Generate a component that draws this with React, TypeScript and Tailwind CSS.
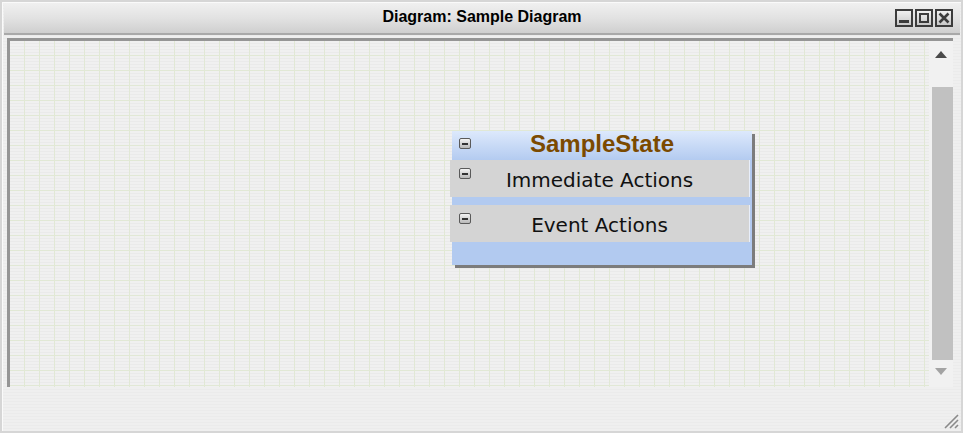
import React from "react";

function Collapse({ className = "" }: { className?: string }) {
  return (
    <div
      className={
        "w-[12px] h-[11px] rounded-[2px] border border-[#5a5a5a] bg-[linear-gradient(to_bottom,#f4f4f4,#b8b8b8)] flex items-center justify-center " +
        className
      }
    >
      <div className="w-[6px] h-[2px] bg-[#333]" />
    </div>
  );
}

function WinBtn({ kind }: { kind: "min" | "max" | "close" }) {
  return (
    <div className="w-[18px] h-[18px] border-2 border-[#3c3c3c] bg-[linear-gradient(to_bottom,#f0f0f0,#c8c8c8)] relative flex items-center justify-center">
      {kind === "min" && <div className="absolute left-[2px] right-[2px] bottom-[2px] h-[3px] bg-[#3c3c3c]" />}
      {kind === "max" && <div className="w-[10px] h-[10px] border-2 border-[#3c3c3c]" />}
      {kind === "close" && (
        <svg width="12" height="12" viewBox="0 0 12 12">
          <path d="M1.5 1.5 L10.5 10.5 M10.5 1.5 L1.5 10.5" stroke="#3c3c3c" strokeWidth="2.6" />
        </svg>
      )}
    </div>
  );
}

export default function App() {
  return (
    <div className="w-[963px] h-[433px] bg-[#d6d6d6] p-[2px] font-['Liberation_Sans',Arial,sans-serif] overflow-hidden">
      <div className="w-full h-full border-t border-l border-[#fafafa] bg-[repeating-linear-gradient(to_bottom,#efefef_0px,#efefef_2px,#ebebeb_2px,#ebebeb_3px)] flex flex-col">
        {/* Title bar */}
        <div className="h-[32px] mx-[1px] bg-[linear-gradient(to_bottom,#f0f0f0,#e2e2e2_50%,#cfcfcf)] border-b-2 border-[#a9a9a9] relative flex items-center justify-center">
          <span className="text-[16px] font-bold text-black leading-none mt-[-2px]">Diagram: Sample Diagram</span>
          <div className="absolute right-[7px] top-[6px] flex gap-[2px]">
            <WinBtn kind="min" />
            <WinBtn kind="max" />
            <WinBtn kind="close" />
          </div>
        </div>

        {/* Body */}
        <div className="flex-1 flex flex-col pt-[3px] pl-[4px] pr-[8px]">
          <div className="h-[349px] flex border-t-[3px] border-l-[3px] border-[#959595]">
            {/* Canvas */}
            <div className="flex-1 relative bg-[linear-gradient(to_right,transparent_14px,#e1e8d5_14px),linear-gradient(to_bottom,transparent_14px,#e1e8d5_14px),repeating-linear-gradient(to_bottom,#f0f0f0_0px,#f0f0f0_2px,#eaeaea_2px,#eaeaea_3px)] bg-[size:15px_15px,15px_15px,auto]">
              {/* Node */}
              <div className="absolute left-[442px] top-[90px] w-[300px]">
                <div className="relative">
                  <div className="absolute left-[3px] top-[3px] right-[-3px] bottom-[-3px] bg-[#7c7c7c]" />
                  <div className="relative bg-[linear-gradient(to_bottom,#dde9fc,#b2caf0_30px,#b2caf0)] h-[134px]">
                    <div className="h-[29px] relative flex items-center justify-center">
                      <Collapse className="absolute left-[7px] top-[7px]" />
                      <span className="text-[24px] font-bold text-[#7b4a00] leading-none mt-[-4px]">SampleState</span>
                    </div>
                    <div className="ml-[-2px] w-[300px] h-[37px] bg-[#d4d4d4] border-r border-[#e8eefa] relative flex items-center justify-center">
                      <Collapse className="absolute left-[9px] top-[8px]" />
                      <span className="text-[20px] text-[#111] font-['DejaVu_Sans',Verdana,sans-serif] leading-none mt-[3px]">Immediate Actions</span>
                    </div>
                    <div className="h-[8px]" />
                    <div className="ml-[-2px] w-[300px] h-[37px] bg-[#d4d4d4] border-r border-[#e8eefa] relative flex items-center justify-center">
                      <Collapse className="absolute left-[9px] top-[8px]" />
                      <span className="text-[20px] text-[#111] font-['DejaVu_Sans',Verdana,sans-serif] leading-none mt-[3px]">Event Actions</span>
                    </div>
                  </div>
                </div>
              </div>
            </div>
            {/* Scrollbar */}
            <div className="w-[24px] bg-[#f1f1f1] flex flex-col relative">
              <div className="h-[46px] w-full flex justify-center pt-[10px]">
                <svg width="12" height="7" viewBox="0 0 12 7"><path d="M0 7 L6 0 L12 7 Z" fill="#4a4a4a" /></svg>
              </div>
              <div className="h-[273px] w-[21px] ml-[3px] bg-[#c1c1c1]" />
              <div className="flex-1 w-full flex justify-center pt-[8px]">
                <svg width="12" height="7" viewBox="0 0 12 7"><path d="M0 0 L6 7 L12 0 Z" fill="#a3a3a3" /></svg>
              </div>
            </div>
          </div>
          {/* Bottom area with resize grip */}
          <div className="flex-1 relative">
            <svg className="absolute right-[-6px] bottom-[2px]" width="18" height="18" viewBox="0 0 18 18">
              <path d="M17 4 L4 17 M17 9 L9 17 M17 14 L14 17" stroke="#8a8a8a" strokeWidth="1.6" />
            </svg>
          </div>
        </div>
      </div>
    </div>
  );
}
